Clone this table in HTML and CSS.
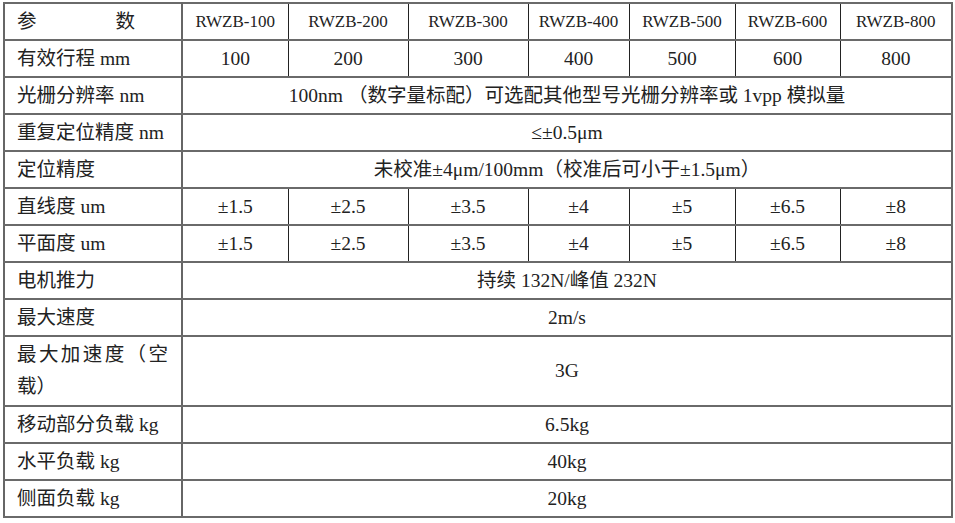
FILE: index.html
```html
<!DOCTYPE html>
<html lang="zh-CN">
<head>
<meta charset="utf-8">
<title>参数表</title>
<link rel="stylesheet" href="styles.css">
</head>
<body>
<div class="wrap">
<table class="spec">
  <colgroup>
    <col class="c-label">
    <col class="c1"><col class="c2"><col class="c3"><col class="c4"><col class="c5"><col class="c6"><col class="c7">
  </colgroup>
  <tbody>
    <tr>
      <td class="label"><span class="spread"><span>参</span><span>数</span></span></td>
      <td class="model">RWZB-100</td>
      <td class="model">RWZB-200</td>
      <td class="model">RWZB-300</td>
      <td class="model">RWZB-400</td>
      <td class="model">RWZB-500</td>
      <td class="model">RWZB-600</td>
      <td class="model">RWZB-800</td>
    </tr>
    <tr>
      <td class="label">有效行程 mm</td>
      <td>100</td><td>200</td><td>300</td><td>400</td><td>500</td><td>600</td><td>800</td>
    </tr>
    <tr>
      <td class="label">光栅分辨率 nm</td>
      <td colspan="7">100nm （数字量标配）可选配其他型号光栅分辨率或 1vpp 模拟量</td>
    </tr>
    <tr>
      <td class="label">重复定位精度 nm</td>
      <td colspan="7">≤±0.5μm</td>
    </tr>
    <tr>
      <td class="label">定位精度</td>
      <td colspan="7">未校准±4μm/100mm（校准后可小于±1.5μm）</td>
    </tr>
    <tr>
      <td class="label">直线度 um</td>
      <td>±1.5</td><td>±2.5</td><td>±3.5</td><td>±4</td><td>±5</td><td>±6.5</td><td>±8</td>
    </tr>
    <tr>
      <td class="label">平面度 um</td>
      <td>±1.5</td><td>±2.5</td><td>±3.5</td><td>±4</td><td>±5</td><td>±6.5</td><td>±8</td>
    </tr>
    <tr>
      <td class="label">电机推力</td>
      <td colspan="7">持续 132N/峰值 232N</td>
    </tr>
    <tr>
      <td class="label">最大速度</td>
      <td colspan="7">2m/s</td>
    </tr>
    <tr class="tall">
      <td class="label multi">最大加速度（空载）</td>
      <td colspan="7">3G</td>
    </tr>
    <tr>
      <td class="label">移动部分负载 kg</td>
      <td colspan="7">6.5kg</td>
    </tr>
    <tr>
      <td class="label">水平负载 kg</td>
      <td colspan="7">40kg</td>
    </tr>
    <tr>
      <td class="label">侧面负载 kg</td>
      <td colspan="7">20kg</td>
    </tr>
  </tbody>
</table>
</div>
</body>
</html>
```

FILE: styles.css
```css
html, body {
  margin: 0;
  padding: 0;
  background: #ffffff;
}

.wrap {
  padding: 2px 0 0 3px;
}

.spec {
  border-collapse: collapse;
  table-layout: fixed;
  width: 948px;
  font-family: "Liberation Serif", "Noto Sans CJK SC", serif;
  font-size: 19.5px;
  color: #222222;
  border: 2px solid #666666;
}

.c-label { width: 178px; }
.c1 { width: 106px; }
.c2 { width: 120px; }
.c3 { width: 120px; }
.c4 { width: 101px; }
.c5 { width: 106px; }
.c6 { width: 105px; }
.c7 { width: 112px; }

.spec tr {
  height: 37px;
}

.spec tr.tall {
  height: 70px;
}

.spec td {
  padding: 0 4px;
  text-align: center;
  vertical-align: middle;
  border-top: 2px solid #6a6a6a;
  border-bottom: 2px solid #6a6a6a;
  border-left: 1px solid #222222;
  border-right: 1px solid #222222;
  line-height: 24px;
  white-space: nowrap;
}

.spec td.label {
  text-align: left;
  padding: 0 13px 0 12px;
  border-right: 2px solid #666666;
  border-left: 2px solid #666666;
}

.spec td.multi {
  white-space: normal;
  text-align: justify;
  line-height: 32px;
  padding-top: 0;
  padding-bottom: 0;
}

.spec td.model {
  font-size: 17px;
}

.spread {
  display: flex;
  justify-content: space-between;
  width: 118px;
}
```
